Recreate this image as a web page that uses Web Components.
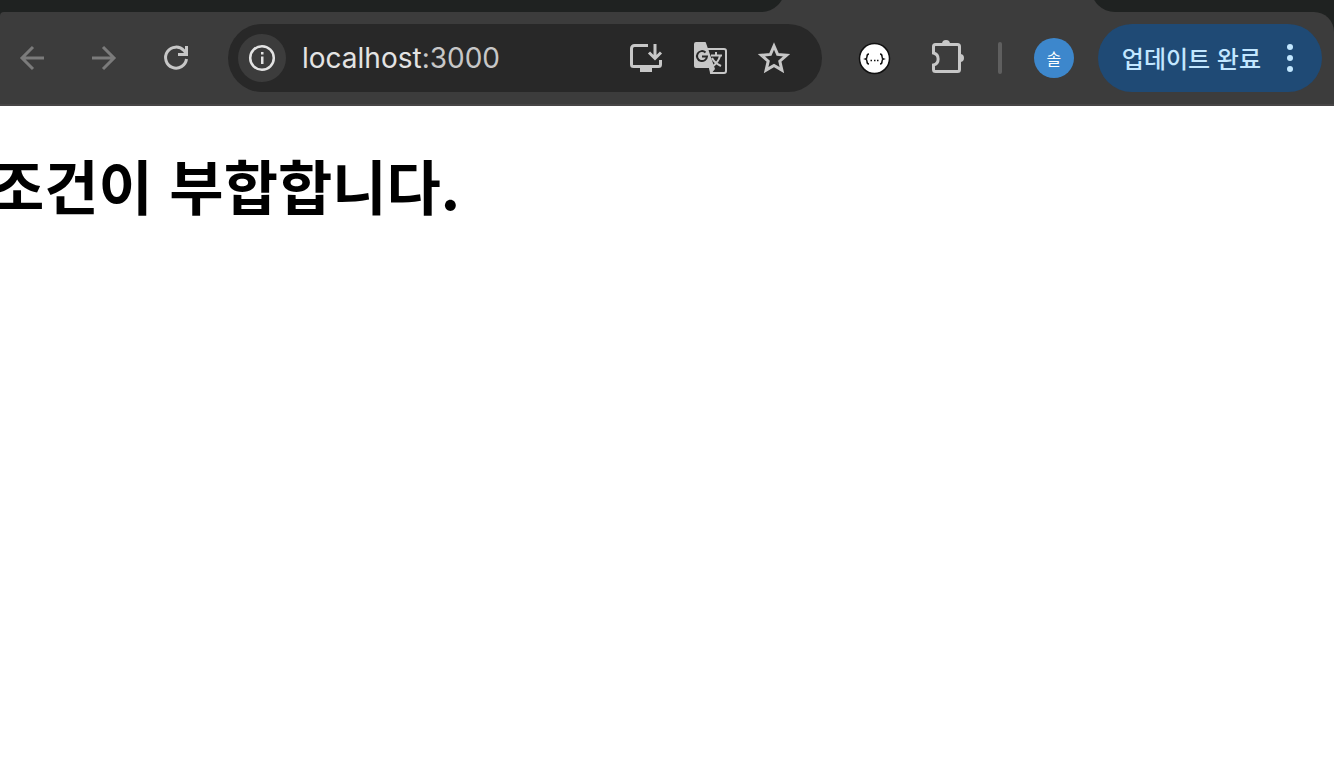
<!DOCTYPE html>
<html lang="ko">
<head>
<meta charset="utf-8">
<meta name="viewport" content="width=device-width, initial-scale=1">
<title>localhost:3000</title>
<style>
    body {
        margin: 0;
        background: #fff;
        color: #000;
        font-family: Inter, "Noto Sans CJK KR", sans-serif;
        overflow-x: hidden;
    }
</style>
</head>
<body>

<browser-chrome>
    <tab-strip slot="tabs"></tab-strip>
    <tool-button label="뒤로" icon="back" muted></tool-button>
    <tool-button label="앞으로" icon="forward" muted></tool-button>
    <tool-button label="새로고침" icon="reload"></tool-button>
    <address-bar host="localhost" port=":3000">
        <tool-button label="앱 설치" icon="install"></tool-button>
        <tool-button label="번역" icon="translate"></tool-button>
        <tool-button label="북마크" icon="star"></tool-button>
    </address-bar>
    <tool-button label="JSON" icon="json"></tool-button>
    <tool-button label="확장 프로그램" icon="puzzle"></tool-button>
    <profile-badge slot="end">솔</profile-badge>
    <update-button slot="end">업데이트 완료</update-button>
</browser-chrome>

<page-view>
    <h1>조건이 부합합니다.</h1>
</page-view>

<script>
const icons = {
    back: `<path d="M44 32H22M33 21 22 32l11 11" fill="none" stroke="currentColor" stroke-width="3"/>`,
    forward: `<path d="M20 32h22M31 21l11 11-11 11" fill="none" stroke="currentColor" stroke-width="3"/>`,
    reload: `<path d="M42.5 33a10.5 10.5 0 1 1-2.6-8.400L42 27" fill="none" stroke="currentColor" stroke-width="3"/>
        <path d="M41 20h3v10H34v-3h7z" fill="currentColor"/>`,
    install: `<path d="M34 19.500H20.500a3 3 0 0 0-3 3V38.500a2 2 0 0 0 2 2h25a2 2 0 0 0 2-2V34" fill="none" stroke="currentColor" stroke-width="3"/>
        <path d="M26 41h12v5H26z" fill="currentColor"/>
        <path d="M41 18v14M35 26.500l6 6 6-6" fill="none" stroke="currentColor" stroke-width="3"/>`,
    translate: `<path d="M29 23h17a2 2 0 0 1 2 2v20a2 2 0 0 1-2 2H33z" fill="none" stroke="currentColor" stroke-width="2"/>
        <path d="M18 16h9a1 1 0 0 1 1 1l9 26-4 5-2-6H18a2 2 0 0 1-2-2V18a2 2 0 0 1 2-2z" fill="currentColor"/>
        <path d="M27.500 26.500a5 5 0 1 0 1.500 4h-5" fill="none" stroke="#282828" stroke-width="2"/>
        <path d="M33 29.500h11M38 26v3M42 30c-1 4-4 8-8 11M34 32c2 4 5 6 9 8" fill="none" stroke="currentColor" stroke-width="2"/>`,
    star: `<path d="m32 20 3.600 8.400 9 .8-6.800 6 2.100 8.900L32 39.400l-7.900 4.700 2.100-8.900-6.800-6 9-.8z" fill="none" stroke="currentColor" stroke-width="3"/>`,
    json: `<circle cx="32.500" cy="32.500" r="15" fill="#fff" stroke="#111" stroke-width="1.500"/>
        <path d="M27 28c-2 0-2 1-2 2.500s0 2-1.500 2.500c1.500.5 1.500 1 1.500 2.500s0 2.500 2 2.500M38 28c2 0 2 1 2 2.500s0 2 1.500 2.500c-1.500.5-1.500 1-1.500 2.500s0 2.500-2 2.500" fill="none" stroke="#111" stroke-width="1.500"/>
        <path d="M28.500 34.500H30M32 34.500h1.500M35 34.500h1.500" stroke="#111" stroke-width="1.500"/>`,
    puzzle: `<path d="M21.500 18.500h22a2 2 0 0 1 2 2v23a2 2 0 0 1-2 2h-22a2 2 0 0 1-2-2V39a6.200 6.200 0 0 0 0-12v-6.500a2 2 0 0 1 2-2z" fill="none" stroke="currentColor" stroke-width="3"/>
        <path d="M28 18a4 4 0 0 1 8 0zM46 28a4 4 0 0 1 0 8z" fill="currentColor"/>`,
    info: `<circle cx="24" cy="24" r="11.800" fill="none" stroke="currentColor" stroke-width="2.500"/>
        <path d="M23 18h2.500v2.500H23zM23 22.500h2.500V30H23z" fill="currentColor"/>`
}

class BrowserChrome extends HTMLElement {

    constructor() {
        super()
        this.root = this.attachShadow({mode: 'open'})
        this.root.innerHTML = `
            <style>
                :host {
                    display: block;
                    background: #1f2221;
                    color: #c7c7c7;
                }
                .toolbar {
                    display: flex;
                    align-items: center;
                    gap: 8px;
                    padding: 12px 12px 12px 0;
                    background: #3c3c3c;
                    border-bottom: 2px solid #474546;
                    border-radius: 4px 20px 0 0;
                }
                .end {
                    display: flex;
                    align-items: center;
                    gap: 24px;
                    margin-left: 12px;
                }
                .divider {
                    width: 4px;
                    height: 32px;
                    margin-right: 8px;
                    border-radius: 2px;
                    background: #5f5f5f;
                }
            </style>
            <slot name="tabs"></slot>
            <nav class="toolbar">
                <slot></slot>
                <div class="end">
                    <div class="divider"></div>
                    <slot name="end"></slot>
                </div>
            </nav>`
    }

}

class TabStrip extends HTMLElement {

    constructor() {
        super()
        this.root = this.attachShadow({mode: 'open'})
        this.root.innerHTML = `
            <style>
                :host {
                    display: grid;
                    grid-template-columns: 785fr 306px 243fr;
                    align-content: end;
                    height: 12px;
                    overflow: hidden;
                    background: #3c3c3c;
                }
                div {
                    height: 24px;
                    background: #1f2221;
                }
                .before {
                    border-bottom-right-radius: 24px;
                }
                .after {
                    grid-column: 3;
                    border-bottom-left-radius: 24px;
                }
            </style>
            <div class="before"></div>
            <div class="after"></div>`
    }

}

class ToolButton extends HTMLElement {

    constructor() {
        super()
        this.root = this.attachShadow({mode: 'open'})
    }

    connectedCallback() {
        this.root.innerHTML = `
            <style>
                :host {
                    display: block;
                    flex: none;
                }
                :host([muted]) {
                    color: #7b7b7b;
                }
                button {
                    display: block;
                    padding: 0;
                    border: 0;
                    background: none;
                    color: inherit;
                }
                svg {
                    display: block;
                }
            </style>
            <button type="button" aria-label="${this.getAttribute('label')}">
                <svg width="64" height="64" viewBox="0 0 64 64">${icons[this.getAttribute('icon')]}</svg>
            </button>`
    }

}

class AddressBar extends HTMLElement {

    constructor() {
        super()
        this.root = this.attachShadow({mode: 'open'})
    }

    connectedCallback() {
        this.root.innerHTML = `
            <style>
                :host {
                    display: flex;
                    flex: 1;
                    align-items: center;
                    min-width: 0;
                    height: 68px;
                    margin: 0 12px;
                    padding: 0 16px 0 10px;
                    box-sizing: border-box;
                    border-radius: 34px;
                    background: #282828;
                }
                button {
                    flex: none;
                    padding: 0;
                    border: 0;
                    border-radius: 50%;
                    background: #3c3c3c;
                    color: #e3e3e3;
                }
                svg {
                    display: block;
                }
                .url {
                    flex: 1;
                    min-width: 0;
                    margin-left: 16px;
                    overflow: hidden;
                    white-space: nowrap;
                    color: #c7c7c7;
                    font-size: 28px;
                    line-height: 40px;
                    text-decoration: none;
                }
                .host {
                    color: #e3e3e3;
                }
            </style>
            <button type="button" aria-label="사이트 정보">
                <svg width="48" height="48" viewBox="0 0 48 48">${icons.info}</svg>
            </button>
            <a class="url" href="#"><span class="host">${this.getAttribute('host')}</span>${this.getAttribute('port')}</a>
            <slot></slot>`
    }

}

class ProfileBadge extends HTMLElement {

    constructor() {
        super()
        this.root = this.attachShadow({mode: 'open'})
        this.root.innerHTML = `
            <style>
                :host {
                    display: block;
                }
                button {
                    display: block;
                    width: 40px;
                    height: 40px;
                    padding: 0;
                    border: 0;
                    border-radius: 50%;
                    background: #3d87cc;
                    color: #fff;
                    font: 16px/40px "Noto Sans CJK KR", sans-serif;
                }
            </style>
            <button type="button"><slot></slot></button>`
    }

}

class UpdateButton extends HTMLElement {

    constructor() {
        super()
        this.root = this.attachShadow({mode: 'open'})
        this.root.innerHTML = `
            <style>
                :host {
                    display: block;
                }
                button {
                    display: flex;
                    align-items: center;
                    gap: 21px;
                    height: 68px;
                    padding: 0 24px;
                    border: 0;
                    border-radius: 34px;
                    background: #1f4a75;
                    color: #c2e7ff;
                    font: 500 24px/36px "Noto Sans CJK KR", sans-serif;
                    white-space: nowrap;
                }
            </style>
            <button type="button">
                <slot></slot>
                <svg width="16" height="32" viewBox="0 0 16 32" fill="currentColor">
                    <circle cx="8" cy="5" r="3"/>
                    <circle cx="8" cy="16" r="3"/>
                    <circle cx="8" cy="27" r="3"/>
                </svg>
            </button>`
    }

}

class PageView extends HTMLElement {

    constructor() {
        super()
        this.root = this.attachShadow({mode: 'open'})
        this.root.innerHTML = `
            <style>
                :host {
                    display: block;
                    padding: 35px 0;
                }
                ::slotted(h1) {
                    margin: 0 0 0 -10px;
                    font: bold 59px/88px "Noto Sans CJK KR", sans-serif;
                    white-space: nowrap;
                }
            </style>
            <main><slot></slot></main>`
    }

}

customElements.define('browser-chrome', BrowserChrome)
customElements.define('tab-strip', TabStrip)
customElements.define('tool-button', ToolButton)
customElements.define('address-bar', AddressBar)
customElements.define('profile-badge', ProfileBadge)
customElements.define('update-button', UpdateButton)
customElements.define('page-view', PageView)
</script>
</body>
</html>
